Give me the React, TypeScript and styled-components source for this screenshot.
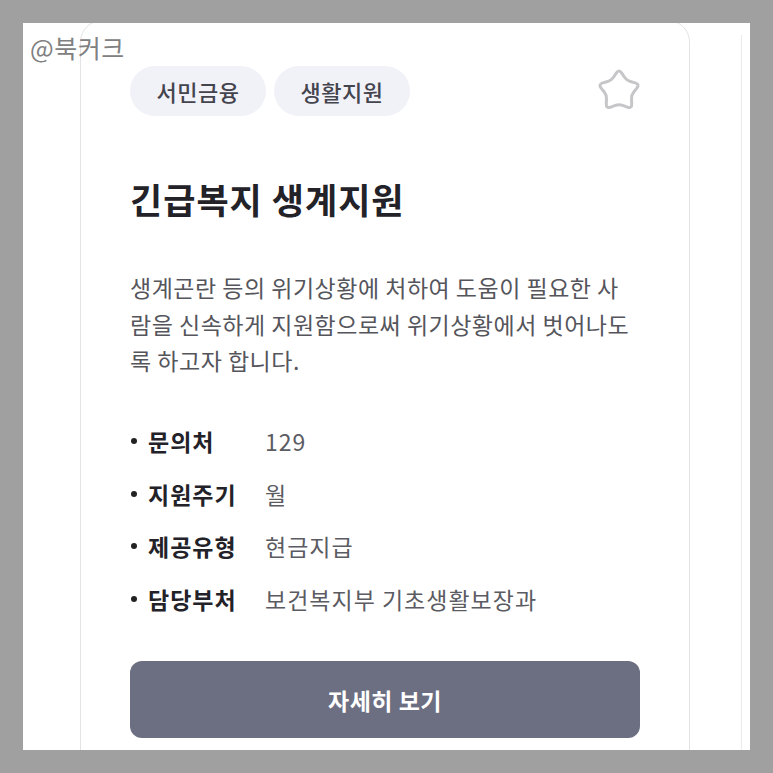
import React from "react";
import styled, { createGlobalStyle } from "styled-components";

const GlobalStyle = createGlobalStyle`
  * { box-sizing: border-box; }
  body {
    margin: 0;
    background: #a0a0a0;
    font-family: "Noto Sans CJK KR", "Noto Sans", sans-serif;
  }
`;

const Frame = styled.div`
  width: 773px;
  height: 773px;
  padding: 23px;
`;

const Canvas = styled.div`
  position: relative;
  width: 727px;
  height: 727px;
  background: #ffffff;
  overflow: hidden;
  display: flex;
  align-items: flex-start;
  gap: 51px;
  padding-left: 57px;
`;

const Watermark = styled.div`
  position: absolute;
  left: 7px;
  top: 6px;
  font-size: 25px;
  color: #808080;
  letter-spacing: 0.5px;
  z-index: 2;
`;

const Card = styled.div`
  flex-shrink: 0;
  width: 610px;
  margin-top: -3px;
  border: 1px solid #e3e3e6;
  border-radius: 22px;
  padding: 45px 49px 40px;
`;

const NextCard = styled.div`
  flex-shrink: 0;
  width: 120px;
  height: 760px;
  margin-top: 12px;
  border-left: 1px solid #ebebee;
`;

const Header = styled.div`
  display: flex;
  justify-content: space-between;
  align-items: flex-start;
`;

const Tags = styled.div`
  display: flex;
  gap: 8px;
`;

const Tag = styled.span`
  display: inline-flex;
  align-items: center;
  justify-content: center;
  width: 136px;
  height: 50px;
  border-radius: 25px;
  background: #f1f1f8;
  color: #44444e;
  font-size: 22px;
  letter-spacing: 0.5px;
  font-weight: 500;
`;

const StarButton = styled.button`
  border: 0;
  background: none;
  padding: 0;
  margin: 2px -3px 0 0;
  cursor: pointer;
  line-height: 0;
`;

const Title = styled.h2`
  margin: 61px 0 0;
  font-size: 35px;
  line-height: 43px;
  font-weight: 700;
  letter-spacing: 1px;
  color: #222228;
`;

const Description = styled.p`
  margin: 49px 0 0;
  font-size: 23px;
  line-height: 36.5px;
  letter-spacing: 0.5px;
  color: #55555c;
  word-break: break-all;
`;

const InfoList = styled.ul`
  margin: 36px 0 0;
  padding: 0;
  list-style: none;
`;

const InfoRow = styled.li`
  display: flex;
  align-items: center;
  height: 52.7px;
  font-size: 23px;
  letter-spacing: 1px;
`;

const Bullet = styled.span`
  width: 6px;
  height: 6px;
  border-radius: 50%;
  background: #222;
  margin: 0 11px 0 1px;
`;

const Label = styled.span`
  width: 117px;
  font-weight: 700;
  color: #222228;
`;

const Value = styled.span`
  color: #5b5b62;
`;

const DetailButton = styled.button`
  display: block;
  width: 100%;
  height: 77px;
  margin-top: 36px;
  border: 0;
  border-radius: 12px;
  background: #6c6e81;
  color: #ffffff;
  font-family: inherit;
  font-size: 23px;
  letter-spacing: 0.5px;
  font-weight: 700;
  cursor: pointer;
`;

function starPath(cx: number, cy: number, R: number, r: number) {
  const pts: { x: number; y: number; k: number }[] = [];
  for (let i = 0; i < 10; i++) {
    const a = ((-90 + i * 36) * Math.PI) / 180;
    const rad = i % 2 === 0 ? R : r;
    pts.push({ x: cx + rad * Math.cos(a), y: cy + rad * Math.sin(a), k: i % 2 === 0 ? 0.36 : 0.28 });
  }
  let d = "";
  pts.forEach((v, i) => {
    const p = pts[(i + 9) % 10];
    const n = pts[(i + 1) % 10];
    const ax = v.x + v.k * (p.x - v.x);
    const ay = v.y + v.k * (p.y - v.y);
    const bx = v.x + v.k * (n.x - v.x);
    const by = v.y + v.k * (n.y - v.y);
    d += `${i === 0 ? "M" : "L"}${ax.toFixed(2)} ${ay.toFixed(2)} Q${v.x.toFixed(2)} ${v.y.toFixed(2)} ${bx.toFixed(2)} ${by.toFixed(2)} `;
  });
  return d + "Z";
}

const StarIcon = () => (
  <svg width="48" height="42" viewBox="0 0 48 42" fill="none">
    <path d={starPath(24, 23, 22, 13)} stroke="#c6c6c9" strokeWidth="3" strokeLinejoin="round" />
  </svg>
);

const info = [
  { label: "문의처", value: "129" },
  { label: "지원주기", value: "월" },
  { label: "제공유형", value: "현금지급" },
  { label: "담당부처", value: "보건복지부 기초생활보장과" },
];

export default function App() {
  return (
    <>
      <GlobalStyle />
      <Frame>
        <Canvas>
          <Watermark>@북커크</Watermark>
          <Card>
            <Header>
              <Tags>
                <Tag>서민금융</Tag>
                <Tag>생활지원</Tag>
              </Tags>
              <StarButton aria-label="즐겨찾기">
                <StarIcon />
              </StarButton>
            </Header>
            <Title>긴급복지 생계지원</Title>
            <Description>
              생계곤란 등의 위기상황에 처하여 도움이 필요한 사람을 신속하게 지원함으로써 위기상황에서 벗어나도록 하고자 합니다.
            </Description>
            <InfoList>
              {info.map((item) => (
                <InfoRow key={item.label}>
                  <Bullet />
                  <Label>{item.label}</Label>
                  <Value>{item.value}</Value>
                </InfoRow>
              ))}
            </InfoList>
            <DetailButton>자세히 보기</DetailButton>
          </Card>
          <NextCard />
        </Canvas>
      </Frame>
    </>
  );
}
